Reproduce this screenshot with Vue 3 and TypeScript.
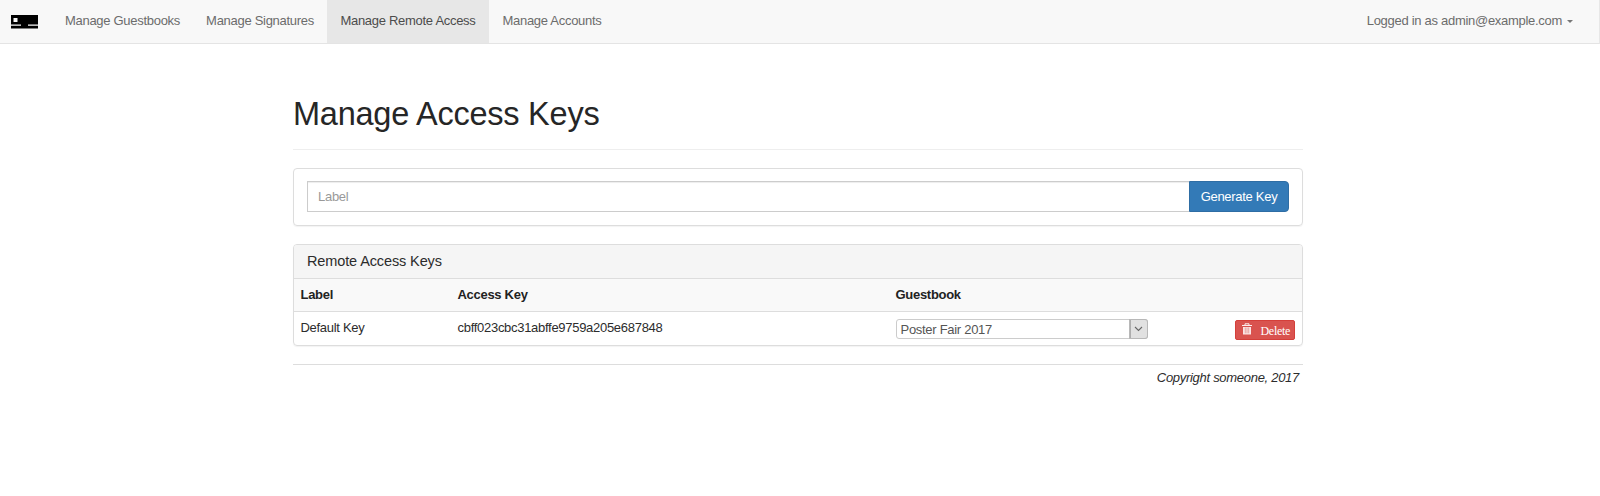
<script setup lang="ts">
interface NavItem { label: string; active?: boolean; width: number }
interface KeyRow { label: string; key: string; guestbook: string }

const nav: NavItem[] = [
  { label: 'Manage Guestbooks', width: 141 },
  { label: 'Manage Signatures', width: 134 },
  { label: 'Manage Remote Access', active: true, width: 162 },
  { label: 'Manage Accounts', width: 126 },
]
const keys: KeyRow[] = [
  { label: 'Default Key', key: 'cbff023cbc31abffe9759a205e687848', guestbook: 'Poster Fair 2017' },
]
</script>

<template>
  <header class="navbar">
    <a class="brand" aria-label="Home">
      <svg width="27" height="14" viewBox="0 0 27 14">
        <path d="M0 0H27V13.5H0Z" fill="#000" />
        <path d="M2.5 3H6.5V7H2.5ZM0 9.5H10V10.7H0ZM17 9.5H27V10.7H17Z" fill="#f8f8f8" />
      </svg>
    </a>
    <nav>
      <a v-for="n in nav" :key="n.label" :class="{ active: n.active }" :style="{ width: n.width + 'px' }">{{ n.label }}</a>
    </nav>
    <a class="account">Logged in as admin@example.com<i class="caret"></i></a>
  </header>
  <main>
    <h1>Manage Access Keys</h1>
    <section class="panel generate">
      <input type="text" placeholder="Label" />
      <button>Generate Key</button>
    </section>
    <section class="panel">
      <h3>Remote Access Keys</h3>
      <div class="row head">
        <span>Label</span><span>Access Key</span><span>Guestbook</span><span></span>
      </div>
      <div v-for="k in keys" :key="k.key" class="row">
        <span>{{ k.label }}</span>
        <span>{{ k.key }}</span>
        <div class="select">
          <span>{{ k.guestbook }}</span>
          <i><svg width="9" height="6" viewBox="0 0 9 6"><path d="M1 1L4.5 4.5L8 1" fill="none" stroke="#666" stroke-width="1.1" /></svg></i>
        </div>
        <button class="delete">
          <svg width="10" height="12" viewBox="0 0 10 12">
            <path d="M0 2.5H10M3 2V0.8H7V2" fill="none" stroke="#fff" stroke-opacity=".9" />
            <path d="M1 4H9V11.5H1Z" fill="#fff" fill-opacity=".85" />
            <path d="M3.3 4.5V10.3M5 4.5V10.3M6.7 4.5V10.3" stroke="#e59592" stroke-width=".8" />
          </svg>
          <span>Delete</span>
        </button>
      </div>
    </section>
    <footer>Copyright someone, 2017</footer>
  </main>
</template>

<style>
body { background: #fff; }
</style>

<style scoped>
* { box-sizing: border-box; }
header, main { font: 13px/18px "Liberation Sans", Arial, sans-serif; letter-spacing: -.29px; color: #2c2c2c; }
.navbar { height: 44px; display: flex; background: #f8f8f8; border-bottom: 1px solid #e4e4e4; border-right: 1px solid #e7e7e7; color: #6c6c6c; }
.brand { width: 52px; padding: 15px 0 0 11px; }
.brand svg { display: block; }
nav { display: flex; flex: 1; }
nav a { text-align: center; padding-top: 12px; height: 43px; white-space: nowrap; }
nav .active { background: #e7e7e7; color: #4c4c4c; }
.account { padding: 12px 26px 0 0; }
.caret { display: inline-block; margin-left: 5px; vertical-align: middle; border: 3px solid transparent; border-top-color: #777; border-bottom: 0; }
main { width: 1010px; margin-left: 293px; }
h1 { font-size: 32.5px; line-height: 36px; letter-spacing: -.24px; font-weight: 400; color: #262626; margin: 0 0 18px; padding: 52px 0 17px; border-bottom: 1px solid #eee; height: 106px; }
.panel { border: 1px solid #ddd; border-radius: 4px; margin-bottom: 18px; box-shadow: 0 1px 1px rgba(0, 0, 0, .05); }
.generate { display: flex; height: 58px; padding: 12px 13px; }
input { flex: 1; min-width: 0; height: 31px; border: 1px solid #ccc; border-right: 0; border-radius: 0; padding: 0 10px; font: inherit; letter-spacing: inherit; box-shadow: inset 0 1px 1px rgba(0, 0, 0, .075); }
input::placeholder { color: #999; opacity: 1; }
.generate button { width: 100px; height: 31px; border: 1px solid #2e6da4; border-radius: 0 4px 4px 0; background: #337ab7; color: #fff; font: inherit; letter-spacing: inherit; padding: 0; }
h3 { margin: 0; height: 33px; padding: 7px 13px; font-size: 14.5px; line-height: 18px; letter-spacing: -.12px; font-weight: 400; background: #f5f5f5; border-radius: 3px 3px 0 0; }
.row { display: grid; grid-template-columns: 157px 438px 252px 1fr; padding: 7px 7px 7px 6.5px; height: 34px; border-top: 1px solid #ddd; }
.head { height: 33px; font-weight: 700; color: #222; background: #f9f9f9; }
.select { height: 20px; display: flex; justify-content: space-between; border: 1px solid #ccc; border-radius: 3px; color: #555; padding-left: 4px; line-height: 20px; }
.select i { width: 17px; display: grid; place-items: center; background: #e1e1e1; border-left: 1px solid #adadad; border-radius: 0 2px 2px 0; box-shadow: 0 0 0 1px #b8b8b8; }
.delete { justify-self: end; margin-top: 1px; width: 60px; height: 20px; display: flex; align-items: center; padding: 0 4px 0 6px; justify-content: space-between; border: 1px solid #d43f3a; border-radius: 2px; background: #d9534f; color: #fff; font: 12px "Liberation Serif", serif; letter-spacing: -.3px; }
.delete svg { margin-top: -2px; }
.delete span { padding-top: 2px; }
footer { border-top: 1px solid #ddd; text-align: right; font-style: italic; padding: 4px 4px 0 0; }
</style>
